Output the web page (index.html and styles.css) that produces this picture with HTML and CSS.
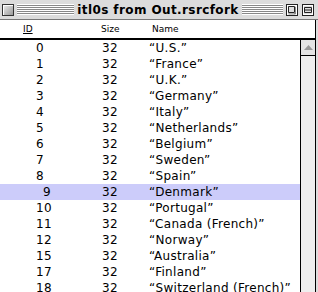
FILE: index.html
```html
<!DOCTYPE html>
<html lang="en">
<head>
<meta charset="utf-8">
<title>itl0s from Out.rsrcfork</title>
<link rel="stylesheet" href="styles.css">
</head>
<body>
<div class="window">
  <div class="titlebar">
    <div class="side">
      <span class="closebox"></span>
      <span class="stripes"></span>
    </div>
    <span class="title">itl0s from Out.rsrcfork</span>
    <div class="side">
      <span class="stripes"></span>
      <svg class="wbox" width="12" height="12" viewBox="0 0 12 12">
        <rect x="0.5" y="0.5" width="11" height="11" fill="#ddd" stroke="#222"/>
        <rect x="1.5" y="1.5" width="9" height="9" fill="none" stroke="#fff"/>
        <path d="M2.5 2.5h6v6h-6z" fill="none" stroke="#222"/>
        <path d="M8.5 8.5v1.5 M9.5 3v7h-7" fill="none" stroke="#888"/>
      </svg>
      <svg class="wbox" width="12" height="12" viewBox="0 0 12 12">
        <rect x="0.5" y="0.5" width="11" height="11" fill="#ddd" stroke="#222"/>
        <rect x="1.5" y="1.5" width="9" height="9" fill="none" stroke="#fff"/>
        <path d="M2.5 3.5h7v5h-7z M2.5 6h7" fill="none" stroke="#222"/>
      </svg>
    </div>
  </div>
  <div class="head">
    <span class="c-id"><u>ID</u></span>
    <span class="c-size">Size</span>
    <span class="c-name">Name</span>
  </div>
  <div class="content">
    <div class="rows">
      <div class="row"><span class="c-id">0</span><span class="c-size">32</span><span class="c-name">“U.S.”</span></div>
      <div class="row"><span class="c-id">1</span><span class="c-size">32</span><span class="c-name">“France”</span></div>
      <div class="row"><span class="c-id">2</span><span class="c-size">32</span><span class="c-name">“U.K.”</span></div>
      <div class="row"><span class="c-id">3</span><span class="c-size">32</span><span class="c-name">“Germany”</span></div>
      <div class="row"><span class="c-id">4</span><span class="c-size">32</span><span class="c-name">“Italy”</span></div>
      <div class="row"><span class="c-id">5</span><span class="c-size">32</span><span class="c-name">“Netherlands”</span></div>
      <div class="row"><span class="c-id">6</span><span class="c-size">32</span><span class="c-name">“Belgium”</span></div>
      <div class="row"><span class="c-id">7</span><span class="c-size">32</span><span class="c-name">“Sweden”</span></div>
      <div class="row"><span class="c-id">8</span><span class="c-size">32</span><span class="c-name">“Spain”</span></div>
      <div class="row selected"><span class="c-id shift">9</span><span class="c-size">32</span><span class="c-name">“Denmark”</span></div>
      <div class="row"><span class="c-id">10</span><span class="c-size">32</span><span class="c-name">“Portugal”</span></div>
      <div class="row"><span class="c-id">11</span><span class="c-size">32</span><span class="c-name">“Canada (French)”</span></div>
      <div class="row"><span class="c-id">12</span><span class="c-size">32</span><span class="c-name">“Norway”</span></div>
      <div class="row"><span class="c-id">15</span><span class="c-size">32</span><span class="c-name">“Australia”</span></div>
      <div class="row"><span class="c-id">17</span><span class="c-size">32</span><span class="c-name">“Finland”</span></div>
      <div class="row"><span class="c-id">18</span><span class="c-size">32</span><span class="c-name">“Switzerland (French)”</span></div>
    </div>
    <div class="scrollbar">
      <div class="arrow"><svg width="13" height="7" viewBox="0 0 13 7"><path d="M6.5 1L11 6H2z" fill="#999"/></svg></div>
    </div>
  </div>
</div>
</body>
</html>
```

FILE: styles.css
```css
* { margin: 0; padding: 0; box-sizing: border-box; }
body { background: #fff; overflow: hidden; }

.window {
  width: 318px;
  height: 292px;
  background: #ddd;
  overflow: hidden;
}

.titlebar {
  height: 20px;
  display: flex;
  align-items: center;
  padding: 0 4px 0 2px;
  background: #dcdcdc;
  border-bottom: 1px solid #777;
}
.side {
  flex: 1;
  display: flex;
  align-items: center;
  gap: 3px;
}
.closebox {
  width: 12px; height: 12px;
  border: 1px solid #333;
  background: linear-gradient(135deg, #eee, #999);
  box-shadow: inset 1px 1px 0 #fff;
}
.stripes {
  flex: 1;
  height: 11px;
  background: repeating-linear-gradient(#fff 0 1px, #888 1px 2px);
}
.title {
  font-family: "DejaVu Sans", sans-serif;
  font-weight: bold;
  font-size: 12px;
  letter-spacing: 0.4px;
  color: #000;
  padding: 0 3px;
}
.wbox { display: block; }
.wbox + .wbox { margin-left: 1px; }

.head {
  height: 20px;
  background: #fff;
  border-right: 1px solid #000;
  margin-right: 2px;
  border-bottom: 2px solid #000;
  display: flex;
  align-items: center;
  font-family: "DejaVu Sans", sans-serif;
  font-size: 9px;
}

.content {
  display: flex;
  height: 252px;
  margin-right: 2px;
  background: #fff;
  border-right: 1px solid #000;
}
.rows { flex: 1; }
.row {
  height: 16px;
  display: flex;
  align-items: center;
  font-family: "DejaVu Sans", sans-serif;
  font-size: 12px;
  letter-spacing: 0.3px;
  color: #000;
}
.row.selected { background: #ccccfa; }

.c-id { width: 100px; padding-left: 36px; }
.head .c-id { padding-left: 23px; }
.c-id.shift { padding-left: 43px; }
.c-size { width: 49px; padding-left: 2px; }
.head .c-size { padding-left: 1px; }
.c-name { flex: 1; }
.head .c-name { padding-left: 3px; }

.scrollbar {
  width: 15px;
  background: #eee;
  border-left: 1px solid #000;
}
.arrow {
  height: 16px;
  border-bottom: 1px solid #000;
  display: flex;
  align-items: center;
  justify-content: center;
  background: #e4e4e4;
}
.arrow svg { display: block; }
```
